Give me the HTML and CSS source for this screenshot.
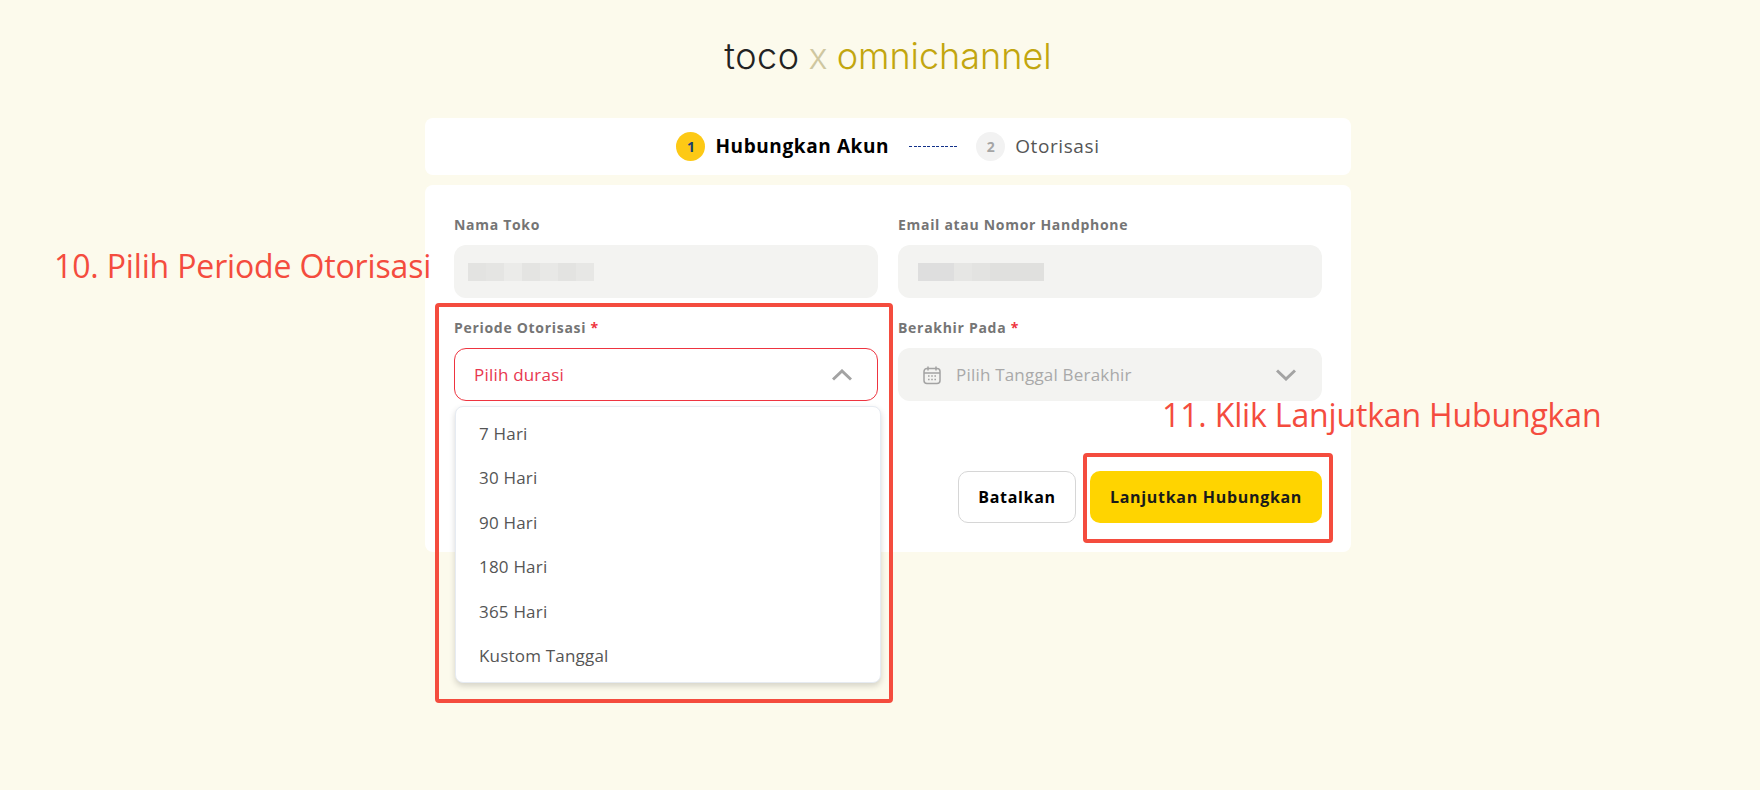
FILE: index.html
```html
<!DOCTYPE html>
<html lang="en">
<head>
<meta charset="UTF-8" />
<meta name="viewport" content="width=device-width, initial-scale=1" />
<title>Hubungkan Akun</title>
<link rel="stylesheet" href="styles.css">
</head>
<body>

<div class="page">
  <div class="logo">
    <span class="logo-toco">toco</span>
    <span class="logo-x">x</span>
    <span class="logo-omni">omnichannel</span>
  </div>

  <div class="stepper">
    <span class="step-num active">1</span>
    <span class="step-name active">Hubungkan Akun</span>
    <span class="step-line"></span>
    <span class="step-num">2</span>
    <span class="step-name">Otorisasi</span>
  </div>

  <div class="form-card">
    <div class="form-grid">
      <div class="field">
        <label>Nama Toko</label>
        <div class="input disabled"><span class="blur blur-left"></span></div>
      </div>
      <div class="field">
        <label>Email atau Nomor Handphone</label>
        <div class="input disabled"><span class="blur blur-right"></span></div>
      </div>

      <div class="field">
        <label>Periode Otorisasi <span class="req">*</span></label>
        <div class="select-wrap">
          <div class="input select-open">
            <span class="placeholder">Pilih durasi</span>
            <svg class="chevron" width="20" height="12" viewBox="0 0 20 12"><path d="M1 10.5 10 2l9 8.5" /></svg>
          </div>
          <ul class="menu">
            <li>7 Hari</li>
            <li>30 Hari</li>
            <li>90 Hari</li>
            <li>180 Hari</li>
            <li>365 Hari</li>
            <li>Kustom Tanggal</li>
          </ul>
        </div>
      </div>
      <div class="field">
        <label>Berakhir Pada <span class="req">*</span></label>
        <div class="input disabled date-input">
          <svg class="calendar" width="20" height="20" viewBox="0 0 20 20">
            <rect x="2" y="3.5" width="16" height="15" rx="3" />
            <path d="M2 8h16M6 1.5v4M14 1.5v4" />
            <path class="dots" d="M6 11h1.6M9.2 11h1.6M12.4 11h1.6M6 14.5h1.6M9.2 14.5h1.6M12.4 14.5h1.6" />
          </svg>
          <span class="date-text">Pilih Tanggal Berakhir</span>
          <svg class="chevron" width="20" height="12" viewBox="0 0 20 12"><path d="M1 1.5l9 8.5 9-8.5" /></svg>
        </div>
      </div>
    </div>

    <div class="actions">
      <button class="btn btn-cancel">Batalkan</button>
      <button class="btn btn-next">Lanjutkan Hubungkan</button>
    </div>
  </div>
</div>

<!-- tutorial annotations drawn over the screenshot -->
<div class="note note-10">10. Pilih Periode Otorisasi</div>
<div class="note note-11">11. Klik Lanjutkan Hubungkan</div>
<div class="mark mark-10"></div>
<div class="mark mark-11"></div>

</body>
</html>
```

FILE: styles.css
```css
* {
  box-sizing: border-box;
}
body {
  margin: 0;
  min-height: 790px;
  background: #fcfaec;
  font-family: 'Open Sans', 'Liberation Sans', sans-serif;
  color: #333;
  overflow: hidden;
}
.page {
  width: 926px;
  margin-left: 425px;
}
.logo {
  height: 118px;
  padding-bottom: 6px;
  display: flex;
  justify-content: center;
  align-items: center;
  gap: 9px;
  font-family: Inter, Lato, sans-serif;
  font-weight: 300;
  font-size: 36px;
  line-height: 1;
}
.logo-toco {
  color: #222;
  letter-spacing: 0.5px;
}
.logo-x {
  color: #cfc7a0;
}
.logo-omni {
  color: #c2a60f;
}
.stepper {
  height: 57px;
  background: #fff;
  border-radius: 8px;
  display: flex;
  justify-content: center;
  align-items: center;
}
.step-num {
  width: 29px;
  height: 29px;
  border-radius: 50%;
  background: #f2f2f2;
  color: #a5a5a5;
  font-size: 14px;
  font-weight: 700;
  display: flex;
  justify-content: center;
  align-items: center;
  margin-right: 10px;
}
.step-num.active {
  background: #fdc915;
  color: #1d3f72;
}
.step-name {
  font-size: 19px;
  letter-spacing: 0.6px;
  color: #555;
  margin-top: -2px;
}
.step-name.active {
  font-weight: 700;
  color: #000;
}
.step-line {
  width: 48px;
  height: 1px;
  background: repeating-linear-gradient(90deg, #12318a 0 3px, transparent 3px 4.5px);
  margin: 0 19px 0 20px;
}
.form-card {
  margin-top: 10px;
  height: 367px;
  background: #fff;
  border-radius: 8px;
  padding: 30px 29px 29px;
}
.form-grid {
  display: grid;
  grid-template-columns: 1fr 1fr;
  column-gap: 20px;
  row-gap: 20px;
}
.field label {
  display: block;
  height: 20px;
  line-height: 20px;
  margin-bottom: 10px;
  font-size: 14px;
  font-weight: 700;
  letter-spacing: 0.7px;
  color: #757575;
}
.req {
  color: #ee3440;
}
.input {
  height: 53px;
  border-radius: 12px;
  display: flex;
  align-items: center;
  font-size: 17px;
}
.input.disabled {
  background: #f3f3f1;
}
.blur {
  display: block;
  width: 126px;
  height: 18px;
}
.blur-left {
  margin-left: 14px;
  background: linear-gradient(90deg, #e3e3e1 0 18px, #e5e5e3 18px 36px, #ebebe9 36px 54px, #e4e4e2 54px 72px, #e8e8e6 72px 90px, #e3e3e1 90px 108px, #e7e7e5 108px);
}
.blur-right {
  margin-left: 20px;
  background: linear-gradient(90deg, #dedede 0 36px, #e6e6e4 36px 54px, #e3e3e1 54px 72px, #e0e0de 72px 126px);
}
.select-wrap {
  position: relative;
}
.select-open {
  background: #fff;
  border: 1px solid #ee3440;
  padding: 0 25px 0 19px;
  justify-content: space-between;
}
.placeholder {
  color: #e8384f;
  letter-spacing: 0.2px;
}
.chevron {
  fill: none;
  stroke: #a3a3a3;
  stroke-width: 3;
}
.date-input {
  padding: 0 26px 0 24px;
}
.calendar {
  fill: none;
  stroke: #a3a3a3;
  stroke-width: 1.5;
  margin-right: 14px;
}
.calendar .dots {
  stroke-width: 1.4;
}
.date-text {
  color: #a9a9a9;
  letter-spacing: 0.2px;
  flex: 1;
}
.menu {
  position: absolute;
  top: 58px;
  left: 1px;
  width: 426px;
  height: 277px;
  margin: 0;
  padding: 5px 0 0;
  list-style: none;
  background: #fff;
  border: 1px solid #e6ebf2;
  border-radius: 8px;
  box-shadow: 0 3px 6px rgba(0, 0, 0, 0.16);
  z-index: 2;
}
.menu li {
  height: 44.4px;
  line-height: 44.4px;
  padding-left: 23px;
  font-size: 17px;
  letter-spacing: 0.2px;
  color: #555;
}
.actions {
  display: flex;
  justify-content: flex-end;
  gap: 14px;
  margin-top: 70px;
}
.btn {
  height: 52px;
  border-radius: 10px;
  font-family: inherit;
  font-size: 16px;
  font-weight: 700;
  letter-spacing: 0.7px;
}
.btn-cancel {
  width: 118px;
  background: #fff;
  border: 1px solid #d6d6d6;
  color: #000;
}
.btn-next {
  width: 232px;
  background: #ffd400;
  border: none;
  color: #1a1a1a;
}
.note {
  position: absolute;
  font-size: 32px;
  line-height: 40px;
  letter-spacing: -0.15px;
  color: #f44c3e;
  white-space: nowrap;
}
.note-10 {
  left: 54px;
  top: 246px;
}
.note-11 {
  left: 1162px;
  top: 395px;
}
.mark {
  position: absolute;
  border: 4px solid #f44c3e;
  border-radius: 4px;
  z-index: 3;
}
.mark-10 {
  left: 435px;
  top: 303px;
  width: 458px;
  height: 400px;
}
.mark-11 {
  left: 1083px;
  top: 453px;
  width: 250px;
  height: 90px;
}
```
